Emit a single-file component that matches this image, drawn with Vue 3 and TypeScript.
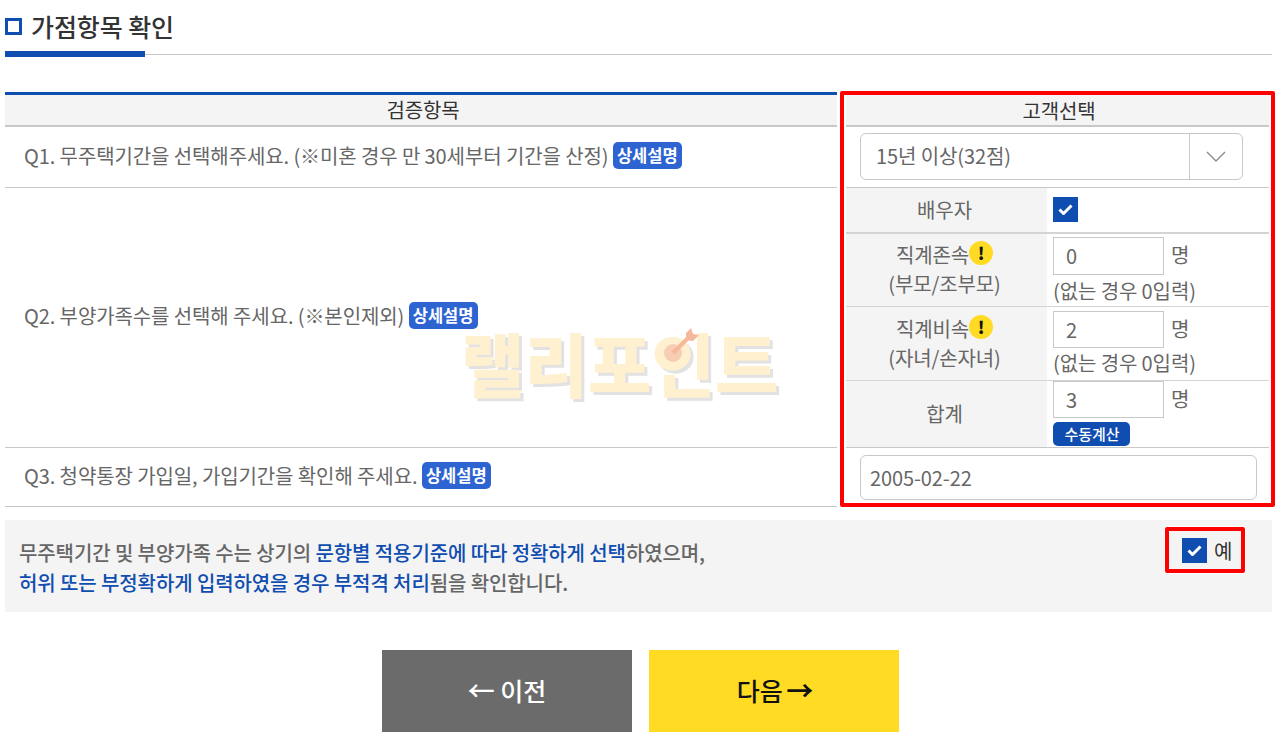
<script setup lang="ts">
interface Member { label: string; sub: string; value: string }
const members: Member[] = [
  { label: '직계존속', sub: '(부모/조부모)', value: '0' },
  { label: '직계비속', sub: '(자녀/손자녀)', value: '2' },
]
</script>

<template>
  <main class="page">
    <header class="head">
      <h2 class="title"><span class="square"></span>가점항목 확인</h2>
    </header>

    <section class="table">
      <div class="th left">검증항목</div>
      <div class="th right">고객선택</div>

      <div class="q q1">Q1. 무주택기간을 선택해주세요. (※미혼 경우 만 30세부터 기간을 산정) <span class="detail">상세설명</span></div>
      <div class="a a1">
        <div class="select">
          <span class="select-text">15년 이상(32점)</span>
          <span class="select-arrow">
            <svg width="20" height="11" viewBox="0 0 20 11"><path d="M1 1l9 9 9-9" fill="none" stroke="#8a8a8a" stroke-width="1.3" /></svg>
          </span>
        </div>
      </div>

      <div class="q q2">Q2. 부양가족수를 선택해 주세요. (※본인제외) <span class="detail">상세설명</span></div>
      <div class="a a2">
        <div class="row r-spouse">
          <div class="label">배우자</div>
          <div class="val"><span class="check"><svg width="15" height="11" viewBox="0 0 15 11"><path d="M1.5 5.5l4 4 8-8" fill="none" stroke="#fff" stroke-width="3" /></svg></span></div>
        </div>
        <div v-for="m in members" :key="m.label" class="row r-member">
          <div class="label">
            <div class="label-top">{{ m.label }}<span class="warn">!</span></div>
            <div>{{ m.sub }}</div>
          </div>
          <div class="val stack">
            <div class="line"><span class="num">{{ m.value }}</span><span class="unit">명</span></div>
            <div class="hint">(없는 경우 0입력)</div>
          </div>
        </div>
        <div class="row r-sum">
          <div class="label">합계</div>
          <div class="val stack">
            <div class="line"><span class="num tall">3</span><span class="unit">명</span></div>
            <span class="calc">수동계산</span>
          </div>
        </div>
      </div>

      <div class="q q3">Q3. 청약통장 가입일, 가입기간을 확인해 주세요. <span class="detail">상세설명</span></div>
      <div class="a a3"><div class="date">2005-02-22</div></div>

      <div class="redbox"></div>
      <div class="watermark">랠리포인트
        <svg class="dart" width="38" height="38" viewBox="0 0 38 38">
          <circle cx="11" cy="27" r="9" fill="#f7cdb3" />
          <path d="M11 27L30 8" stroke="#f7b79a" stroke-width="4" />
          <path d="M24 7l5-5 2 6 6 1-6 6-7-1z" fill="#f7b79a" />
        </svg>
      </div>
    </section>

    <section class="agree">
      <p class="agree-text">
        무주택기간 및 부양가족 수는 상기의 <b>문항별 적용기준에 따라 정확하게 선택</b>하였으며,<br />
        <b>허위 또는 부정확하게 입력하였을 경우 부적격 처리</b>됨을 확인합니다.
      </p>
      <div class="yes">
        <span class="check"><svg width="15" height="11" viewBox="0 0 15 11"><path d="M1.5 5.5l4 4 8-8" fill="none" stroke="#fff" stroke-width="3" /></svg></span>
        <span class="yes-text">예</span>
      </div>
    </section>

    <nav class="btns">
      <button class="btn prev" type="button"><span class="arrow">←</span> 이전</button>
      <button class="btn next" type="button">다음 <span class="arrow">→</span></button>
    </nav>
  </main>
</template>

<style>
html, body { margin: 0; background: #fff; overflow: hidden; }
</style>

<style scoped>
.page {
  width: 1277px;
  height: 737px;
  overflow: hidden;
  box-sizing: border-box;
  padding: 0 5px;
  font-family: "Noto Sans CJK KR", "Noto Sans", sans-serif;
  font-size: 20px;
  letter-spacing: -0.1px;
  color: #666;
}
.head {
  height: 55px;
  box-sizing: border-box;
  border-bottom: 1px solid #c8c8c8;
  position: relative;
}
.head::after {
  content: "";
  position: absolute;
  left: 0;
  bottom: -3px;
  width: 140px;
  height: 6px;
  background: #0f4db0;
}
.title {
  margin: 0;
  display: flex;
  align-items: center;
  height: 52px;
  font-size: 25px;
  font-weight: 500;
  color: #333;
  letter-spacing: -0.1px;
}
.square {
  box-sizing: border-box;
  width: 17px;
  height: 17px;
  border: 3px solid #0f4db0;
  margin-right: 9px;
}
.table {
  position: relative;
  margin-top: 37px;
  display: grid;
  grid-template-columns: 832px 423px;
  column-gap: 9px;
  grid-template-rows: 35px 61px 260px 59px;
}
.th {
  box-sizing: border-box;
  background: #f4f4f4;
  border-bottom: 2px solid #c8c8c8;
  text-align: center;
  color: #333;
  line-height: 31px;
  padding-top: 3px;
  padding-left: 3px;
}
.th.left { border-top: 3px solid #0f4db0; padding-top: 0; line-height: 29px; padding-left: 4px; }
.q {
  box-sizing: border-box;
  border-bottom: 1px solid #c8c8c8;
  display: flex;
  align-items: center;
  padding-left: 19px;
  white-space: pre-wrap;
  padding-bottom: 4px;
}
.q3 { padding-bottom: 3px; }
.detail {
  display: inline-block;
  background: #2d64d2;
  color: #fff;
  font-size: 16.5px;
  font-weight: 700;
  letter-spacing: 0;
  line-height: 26px;
  height: 27px;
  width: 69px;
  text-align: center;
  border-radius: 5px;
}
.a { box-sizing: border-box; border-bottom: 1px solid #c8c8c8; }
.a1 { padding: 6px 26px 0 14px; }
.select {
  box-sizing: border-box;
  display: flex;
  height: 47px;
  border: 1px solid #c8c8c8;
  border-radius: 6px;
}
.select-text { flex: 1; padding-left: 15px; line-height: 43px; }
.select-arrow {
  width: 52px;
  border-left: 1px solid #c8c8c8;
  display: flex;
  align-items: center;
  justify-content: center;
}
.a2 { display: flex; flex-direction: column; }
.row { display: flex; box-sizing: border-box; border-bottom: 1px solid #d4d4d4; }
.row:last-child { border-bottom: 0; }
.r-spouse { height: 46px; border-bottom-width: 2px; }
.r-member { height: 73px; }
.r-member + .r-member { height: 74px; }
.r-sum { flex: 1; }
.label {
  width: 201px;
  flex: none;
  background: #f4f4f4;
  text-align: center;
  align-self: stretch;
  display: flex;
  flex-direction: column;
  justify-content: center;
  line-height: 29px;
  padding-bottom: 2px;
  padding-right: 4px;
  box-sizing: border-box;
}
.label-top { display: flex; justify-content: center; align-items: center; height: 29px; }
.warn {
  width: 24px;
  height: 24px;
  border-radius: 50%;
  background: #ffdc23;
  color: #111;
  font-weight: 900;
  font-size: 17px;
  line-height: 24px;
  text-align: center;
  margin-top: -3px;
}
.val { padding-left: 6px; flex: 1; }
.r-spouse .val { padding-top: 9px; }
.check {
  width: 25px;
  height: 25px;
  background: #0f4db0;
  display: flex;
  align-items: center;
  justify-content: center;
}
.stack { display: flex; flex-direction: column; align-items: flex-start; }
.r-member .stack { padding-top: 3px; }
.r-member + .r-member .stack { padding-top: 4px; }
.line { display: flex; align-items: flex-start; }
.num {
  box-sizing: border-box;
  width: 111px;
  height: 38px;
  border: 1px solid #c8c8c8;
  padding-left: 12px;
  line-height: 36px;
}
.r-member + .r-member .num { height: 37px; line-height: 35px; }
.num.tall { height: 37px; }
.unit { margin-left: 7px; line-height: 36px; }
.hint { line-height: 29px; margin-top: 1px; white-space: nowrap; }
.r-member + .r-member .hint { margin-top: 0; }
.calc {
  margin-top: 4px;
  width: 77px;
  height: 24px;
  border-radius: 5px;
  background: #0f4db0;
  color: #fff;
  text-align: center;
  font-size: 15px;
  font-weight: 500;
  letter-spacing: 0;
  line-height: 23px;
  padding-left: 1px;
  box-sizing: border-box;
}
.a3 { padding: 7px 12px 0 14px; }
.date {
  box-sizing: border-box;
  height: 45px;
  border: 1px solid #c8c8c8;
  border-radius: 6px;
  padding-left: 9px;
  line-height: 43px;
}
.redbox {
  position: absolute;
  left: 835px;
  top: -1px;
  width: 435px;
  height: 416px;
  box-sizing: border-box;
  border: 4px solid #f00;
  border-radius: 2px;
  pointer-events: none;
}
.watermark {
  position: absolute;
  left: 456px;
  top: 241px;
  font-size: 69px;
  font-weight: 900;
  line-height: 58px;
  letter-spacing: 0;
  color: #fff1cf;
  text-shadow: 3px 3px 0 #e2e2e2;
  white-space: nowrap;
}
.dart { position: absolute; left: 201px; top: -7px; }
.agree {
  margin-top: 13px;
  height: 92px;
  background: #f4f4f4;
  display: flex;
  justify-content: space-between;
  box-sizing: border-box;
  padding-left: 14px;
  position: relative;
}
.agree-text {
  margin: 0;
  padding-top: 18px;
  line-height: 30px;
  font-weight: 500;
  color: #666;
}
.agree-text b { font-weight: 500; color: #0f4db0; }
.yes {
  position: absolute;
  left: 1160px;
  top: 7px;
  width: 80px;
  height: 46px;
  box-sizing: border-box;
  border: 4px solid #f00;
  border-radius: 2px;
  background: #f4f4f4;
  box-shadow: 0 0 0 1px #fff;
  display: flex;
  align-items: center;
  padding-left: 13px;
  gap: 7px;
}
.yes-text { color: #333; }
.btns {
  margin-top: 38px;
  display: flex;
  justify-content: center;
  gap: 17px;
  padding-left: 4px;
}
.btn {
  width: 250px;
  height: 82px;
  border: 0;
  font-family: inherit;
  font-size: 25px;
  font-weight: 500;
  padding: 0 0 2px;
}
.prev { background: #6b6b6b; color: #fff; }
.next { background: #ffdc23; color: #111; padding-left: 2px; }
.arrow { font-size: 27px; line-height: 27px; }
.next .arrow { font-weight: 700; margin-left: -2px; }
</style>
